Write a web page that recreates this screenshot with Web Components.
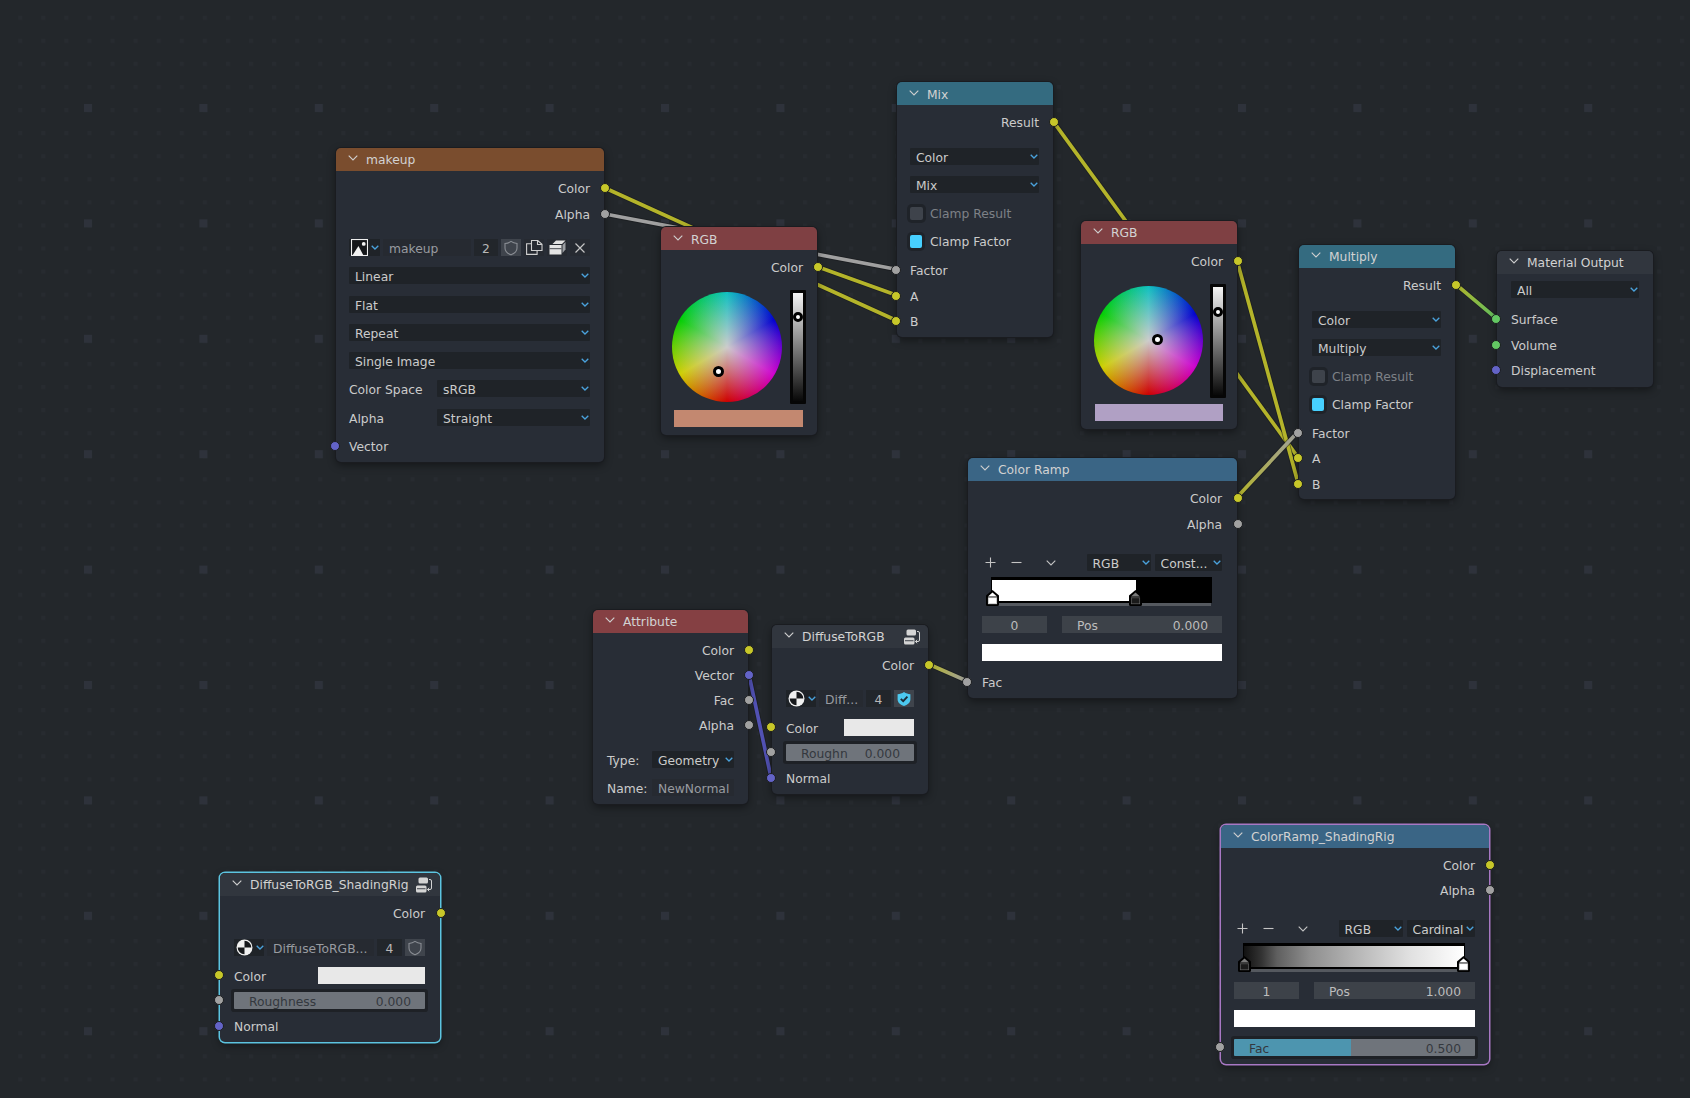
<!DOCTYPE html>
<html lang="en">
<head>
<meta charset="utf-8">
<title>Shader editor</title>
<style>
html,body{margin:0;padding:0;background:#23272b;}
</style>
</head>
<body>
<bn-canvas>
  <bn-links></bn-links>

  <bn-node x="336" y="148" w="268" label="makeup" head="#7a4d2e" pl="13" pr="14" pb="7">
    <bn-row mt="9" align="right" socket="yellow" side="right">Color</bn-row>
    <bn-row mt="9" align="right" socket="gray" side="right">Alpha</bn-row>
    <bn-row mt="16" gap="3">
      <bn-iconbtn kind="dropdown" icon="image" style="width:31px"></bn-iconbtn>
      <bn-field style="flex:1">makeup</bn-field>
      <bn-field center dark style="width:24px">2</bn-field>
      <bn-iconbtn icon="shield" on style="width:20px"></bn-iconbtn>
      <bn-iconbtn icon="dup" style="width:20px"></bn-iconbtn>
      <bn-iconbtn icon="fake" style="width:20px"></bn-iconbtn>
      <bn-iconbtn icon="x" style="width:20px"></bn-iconbtn>
    </bn-row>
    <bn-row mt="11"><bn-select style="flex:1">Linear</bn-select></bn-row>
    <bn-row mt="12"><bn-select style="flex:1">Flat</bn-select></bn-row>
    <bn-row mt="11"><bn-select style="flex:1">Repeat</bn-select></bn-row>
    <bn-row mt="11"><bn-select style="flex:1">Single Image</bn-select></bn-row>
    <bn-row mt="11"><bn-label style="width:88px">Color Space</bn-label><bn-select style="flex:1">sRGB</bn-select></bn-row>
    <bn-row mt="12"><bn-label style="width:88px">Alpha</bn-label><bn-select style="flex:1">Straight</bn-select></bn-row>
    <bn-row mt="12" socket="purple" side="left">Vector</bn-row>
  </bn-node>

  <bn-node x="661" y="227" w="156" label="RGB" head="#7f4043" ht="3" pl="13" pr="14" pb="8">
    <bn-row mt="9" align="right" socket="yellow" side="right">Color</bn-row>
    <bn-wheel mt="14" ml="-1.700" size="110" dx="46.500" dy="79" ty="27"></bn-wheel>
    <bn-swatch mt="6" color="#c38870"></bn-swatch>
  </bn-node>

  <bn-node x="897" y="82" w="156" label="Mix" head="#346b80" ht="3" pl="13" pr="14" pb="7">
    <bn-row mt="9" align="right" socket="yellow" side="right">Result</bn-row>
    <bn-row mt="17"><bn-select style="flex:1">Color</bn-select></bn-row>
    <bn-row mt="11"><bn-select style="flex:1">Mix</bn-select></bn-row>
    <bn-row mt="12"><bn-check>Clamp Result</bn-check></bn-row>
    <bn-row mt="11"><bn-check checked>Clamp Factor</bn-check></bn-row>
    <bn-row mt="12" socket="gray" side="left">Factor</bn-row>
    <bn-row mt="9" socket="yellow" side="left">A</bn-row>
    <bn-row mt="8" socket="yellow" side="left">B</bn-row>
  </bn-node>

  <bn-node x="1081" y="221" w="156" label="RGB" head="#7f4043" pl="13" pr="14" pb="8">
    <bn-row mt="9" align="right" socket="yellow" side="right">Color</bn-row>
    <bn-wheel mt="14" ml="-0.300" size="109" dx="63.300" dy="53" ty="27.500"></bn-wheel>
    <bn-swatch mt="6" color="#b0a0c4" style="margin-left:1px"></bn-swatch>
  </bn-node>

  <bn-node x="1299" y="245" w="156" label="Multiply" head="#346b80" pl="13" pr="14" pb="6">
    <bn-row mt="9" align="right" socket="yellow" side="right">Result</bn-row>
    <bn-row mt="17"><bn-select style="flex:1">Color</bn-select></bn-row>
    <bn-row mt="11"><bn-select style="flex:1">Multiply</bn-select></bn-row>
    <bn-row mt="12"><bn-check>Clamp Result</bn-check></bn-row>
    <bn-row mt="11"><bn-check checked>Clamp Factor</bn-check></bn-row>
    <bn-row mt="12" socket="gray" side="left">Factor</bn-row>
    <bn-row mt="8" socket="yellow" side="left">A</bn-row>
    <bn-row mt="9" socket="yellow" side="left">B</bn-row>
  </bn-node>

  <bn-node x="1497" y="251" w="156" label="Material Output" head="#31363e" pl="14" pr="14" pb="8">
    <bn-row mt="7"><bn-select style="flex:1">All</bn-select></bn-row>
    <bn-row mt="13" socket="green" side="left">Surface</bn-row>
    <bn-row mt="9" socket="green" side="left">Volume</bn-row>
    <bn-row mt="8" socket="purple" side="left">Displacement</bn-row>
  </bn-node>

  <bn-node x="968" y="458" w="269" label="Color Ramp" head="#3a6585" pl="14" pr="15" pb="7">
    <bn-row mt="9" align="right" socket="yellow" side="right">Color</bn-row>
    <bn-row mt="9" align="right" socket="gray" side="right">Alpha</bn-row>
    <bn-ramp-tools mt="21" mode="Const..."></bn-ramp-tools>
    <bn-ramp mt="6" fill="linear-gradient(90deg,#fff 0,#fff 65.700%,#000 65.700%)" width="221" a="1.500" acolor="#fff" b="145" bcolor="#000"></bn-ramp>
    <bn-row mt="10" gap="15">
      <bn-num center style="width:65px">0</bn-num>
      <bn-num value="0.000" style="flex:1">Pos</bn-num>
    </bn-row>
    <bn-swatch mt="11" color="#ffffff"></bn-swatch>
    <bn-row mt="13" socket="gray" side="left">Fac</bn-row>
  </bn-node>

  <bn-node x="1221" y="825" w="268" label="ColorRamp_ShadingRig" head="#3a6585" pl="13" pr="14" pb="8" outline="#a878c4">
    <bn-row mt="9" align="right" socket="yellow" side="right">Color</bn-row>
    <bn-row mt="8" align="right" socket="gray" side="right">Alpha</bn-row>
    <bn-ramp-tools mt="21" mode="Cardinal"></bn-ramp-tools>
    <bn-ramp mt="6" fill="linear-gradient(90deg,#111 0,#333 8%,#5f5f5f 15%,#8f8f8f 30%,#b4b4b4 50%,#e0e0e0 75%,#fff 100%)" width="222" a="1.500" acolor="#000" b="221" bcolor="#fff"></bn-ramp>
    <bn-row mt="10" gap="15">
      <bn-num center style="width:65px">1</bn-num>
      <bn-num value="1.000" style="flex:1">Pos</bn-num>
    </bn-row>
    <bn-swatch mt="11" color="#ffffff"></bn-swatch>
    <bn-row mt="12" socket="gray" side="left"><bn-bar value="0.500" fill="48.600" style="flex:1">Fac</bn-bar></bn-row>
  </bn-node>

  <bn-node x="593" y="610" w="155" label="Attribute" head="#854043" pl="14" pr="14" pb="8">
    <bn-row mt="9" align="right" socket="yellow" side="right">Color</bn-row>
    <bn-row mt="8" align="right" socket="purple" side="right">Vector</bn-row>
    <bn-row mt="8" align="right" socket="gray" side="right">Fac</bn-row>
    <bn-row mt="8" align="right" socket="gray" side="right">Alpha</bn-row>
    <bn-row mt="17"><bn-label style="width:45px">Type:</bn-label><bn-select style="flex:1">Geometry</bn-select></bn-row>
    <bn-row mt="11"><bn-label style="width:45px">Name:</bn-label><bn-field style="flex:1">NewNormal</bn-field></bn-row>
  </bn-node>

  <bn-node x="772" y="625" w="156" label="DiffuseToRGB" head="#31363e" group pl="14" pr="14" pb="7">
    <bn-row mt="9" align="right" socket="yellow" side="right">Color</bn-row>
    <bn-row mt="16" gap="3">
      <bn-iconbtn kind="dropdown" icon="sphere" style="width:30px"></bn-iconbtn>
      <bn-field style="flex:1">Diff...</bn-field>
      <bn-field center dark style="width:25px">4</bn-field>
      <bn-iconbtn icon="shieldon" on style="width:20px"></bn-iconbtn>
    </bn-row>
    <bn-row mt="12" socket="yellow" side="left"><bn-label style="width:58px">Color</bn-label><bn-swatch color="#e8e8e8" style="flex:1"></bn-swatch></bn-row>
    <bn-row mt="8" socket="gray" side="left"><bn-bar value="0.000" style="flex:1">Roughn</bn-bar></bn-row>
    <bn-row mt="9" socket="purple" side="left">Normal</bn-row>
  </bn-node>

  <bn-node x="220" y="873" w="220" label="DiffuseToRGB_ShadingRig" head="#31363e" group pl="14" pr="15" pb="7" outline="#5cc4e0">
    <bn-row mt="9" align="right" socket="yellow" side="right">Color</bn-row>
    <bn-row mt="17" gap="3">
      <bn-iconbtn kind="dropdown" icon="sphere" style="width:30px"></bn-iconbtn>
      <bn-field style="flex:1">DiffuseToRGB...</bn-field>
      <bn-field center dark style="width:25px">4</bn-field>
      <bn-iconbtn icon="shield" on style="width:20px"></bn-iconbtn>
    </bn-row>
    <bn-row mt="11" socket="yellow" side="left"><bn-label style="width:84px">Color</bn-label><bn-swatch color="#e8e8e8" style="flex:1"></bn-swatch></bn-row>
    <bn-row mt="8" socket="gray" side="left"><bn-bar value="0.000" style="flex:1">Roughness</bn-bar></bn-row>
    <bn-row mt="9" socket="purple" side="left">Normal</bn-row>
  </bn-node>
</bn-canvas>

<script>
const FONT = '"DejaVu Sans","Liberation Sans",sans-serif';
const ICONS = {
  image:`<svg viewBox="0 0 16 16" width="17" height="17"><rect x=".5" y=".5" width="15" height="15" fill="#15171a" stroke="#eee"/><path d="M1 16 7 6.500l5 9.500z" fill="#f2f2f2"/><circle cx="12" cy="4.600" r="1.800" fill="#f2f2f2"/></svg>`,
  sphere:`<svg viewBox="0 0 16 16" width="17" height="17"><circle cx="8" cy="8" r="7.500" fill="#f0f0f0"/><path d="M8 8V1.600A6.400 6.400 0 0 1 14.400 8z M8 8v6.400A6.400 6.400 0 0 1 1.600 8z" fill="#16181b"/></svg>`,
  shield:`<svg viewBox="0 0 16 16" width="16" height="16"><path d="M8 1.400c2 1.400 4 1.900 6 2.100v4.600c0 3.300-2.700 5.600-6 6.700-3.300-1.100-6-3.400-6-6.700V3.500c2-.2 4-.7 6-2.100z" fill="none" stroke="#8a8e94" stroke-width="1.100"/></svg>`,
  shieldon:`<svg viewBox="0 0 16 16" width="16" height="16"><path d="M8 1c2 1.500 4 2 6.400 2.200v5c0 3.400-3 5.800-6.400 6.800-3.400-1-6.400-3.400-6.400-6.800v-5C4 3 6 2.500 8 1z" fill="#4cc9f0"/><path d="M4.800 7.800 7.200 10.200 11.400 5.600" fill="none" stroke="#1c2c38" stroke-width="1.900"/></svg>`,
  dup:`<svg viewBox="0 0 17 15" width="17" height="15"><path d="M5.500 10.500V.5h6.200L16 4.300v6.200z M11.500.5v4h4.500" fill="none" stroke="#cfcfcf" stroke-width="1.100"/><path d="M5 3.800H.6v10.600h10.500V10.600" fill="none" stroke="#cfcfcf" stroke-width="1.100"/></svg>`,
  fake:`<svg viewBox="0 0 17 15" width="17" height="15"><path d="M3.500 4 7 .5h9.500L13 4z" fill="#e2e2e2"/><path d="M.5 5H12.500V14.500H.5z" fill="#e4e4e4"/><path d="M.5 8.700H12.500" stroke="#45494f" stroke-width="1"/><path d="M13.500 5 16.500 2V9.500L13.500 13z" fill="#9b9ea3"/></svg>`,
  x:`<svg viewBox="0 0 12 12" width="12" height="12"><path d="M1.500 1.500 10.500 10.500M10.500 1.500 1.500 10.500" stroke="#c4c4c4" stroke-width="1.200" fill="none"/></svg>`,
};
const GROUP = `<svg viewBox="0 0 16 16" width="16" height="16"><rect x="2.500" y=".5" width="9.500" height="6" rx="1.500" fill="#d4d4d4"/><rect x="0" y="8.500" width="10.500" height="7" rx="1.500" fill="#d4d4d4"/><rect x="1" y="11.300" width="8.500" height=".9" fill="#31363e"/><path d="M13 2.500h1a1.500 1.500 0 0 1 1.500 1.500v7a1.500 1.500 0 0 1-1.500 1.500h-2.500M13.200 10.800l-1.800 1.700 1.800 1.700" fill="none" stroke="#d4d4d4" stroke-width="1"/></svg>`;
const CHEV = c => `<svg viewBox="0 0 10 6" width="10" height="6"><path d="M.7.7 5 5 9.300.7" fill="none" stroke="${c}" stroke-width="1.100"/></svg>`;
const SMALLCHEV = `<svg viewBox="0 0 8 5" width="8" height="5"><path d="M.7.7 4 4 7.300.7" fill="none" stroke="#4aa2dc" stroke-width="1.300"/></svg>`;
const SOCK = {yellow:'#c7c729',gray:'#a1a1a1',purple:'#6363c7',green:'#63c763'};

function el(name, css, html, init){
  customElements.define(name, class extends HTMLElement{
    constructor(){ super(); this.attachShadow({mode:'open'}); }
    connectedCallback(){
      if(this._done) return; this._done = true;
      const h = typeof html === 'function' ? html(this) : html;
      this.shadowRoot.innerHTML = `<style>${css}</style>${h}`;
      if(this.hasAttribute('mt')) this.style.marginTop = this.getAttribute('mt') + 'px';
      if(init) init(this);
    }
  });
}

el('bn-canvas', `
  :host{display:block;position:relative;width:1690px;height:1098px;overflow:hidden;background:#23272b;
    font:12.300px/17px ${FONT};color:#cbcbcb;}
  svg{position:absolute;inset:0;}
`, `<svg width="1690" height="1098" aria-hidden="true">
    <defs>
      <pattern id="s" x="18.200" y="15.700" width="23.080" height="23.080" patternUnits="userSpaceOnUse"><rect width="4" height="4" fill="#272b30"/></pattern>
      <pattern id="b" x="84" y="104" width="115.400" height="115.400" patternUnits="userSpaceOnUse"><rect width="8" height="8" fill="#2e323b"/></pattern>
    </defs>
    <rect width="1690" height="1098" fill="url(#s)"/>
    <rect width="1690" height="1098" fill="url(#b)"/>
  </svg><slot></slot>`);

el('bn-links', `:host{position:absolute;inset:0;display:block;} svg{display:block;}`, () => {
  const c = {y:'#b4b42a',g:'#a0a0a0',p:'#5252b4',n:'#5fbf5f'};
  const L = [
    [605,188,896,320.3,'y','y'],
    [605,214,896,269.3,'g','g'],
    [817.5,266.7,896,295,'y','y'],
    [1053.3,121.7,1298,457.3,'y','y'],
    [1237,260.5,1298,482.7,'y','y'],
    [1237,497.3,1298,431.7,'y','g'],
    [1455.4,284,1496.3,318.3,'y','n'],
    [749,675,771,777.3,'p','p'],
    [928.3,664,967,681,'y','g'],
  ];
  let defs='', body='';
  L.forEach((l,i)=>{
    defs += `<linearGradient id="g${i}" gradientUnits="userSpaceOnUse" x1="${l[0]}" y1="${l[1]}" x2="${l[2]}" y2="${l[3]}"><stop offset="0" stop-color="${c[l[4]]}"/><stop offset="1" stop-color="${c[l[5]]}"/></linearGradient>`;
    const d = `M${l[0]} ${l[1]}L${l[2]} ${l[3]}`;
    body += `<path d="${d}" stroke="#15171a" stroke-opacity=".55" stroke-width="5.400" fill="none"/><path d="${d}" stroke="url(#g${i})" stroke-width="3.700" fill="none"/>`;
  });
  return `<svg width="1690" height="1098" aria-hidden="true"><defs>${defs}</defs>${body}</svg>`;
});

el('bn-node', `
  :host{position:absolute;display:block;box-sizing:border-box;background:#282d36;border-radius:5px;
    box-shadow:0 0 0 1px #1a1c20,0 3px 8px rgba(0,0,0,.45);}
  .h{height:23px;display:flex;align-items:center;border-radius:5px 5px 0 0;color:#d2d2d2;white-space:nowrap;padding-top:1px;box-sizing:border-box;}
  .c{margin-left:12px;width:10px;height:6px;margin-top:-4px;margin-right:8px;flex:none;display:flex;}
  .g{margin-left:auto;margin-right:8px;display:flex;margin-top:-1px;}
  .b{display:flex;flex-direction:column;}
`, n => `<div class="h" style="background:${n.getAttribute('head')}${n.hasAttribute('ht')?`;padding-top:${n.getAttribute('ht')}px`:''}"><span class="c">${CHEV('#cfcfcf')}</span><span>${n.getAttribute('label')}</span>${n.hasAttribute('group')?`<span class="g">${GROUP}</span>`:''}</div><div class="b"><slot></slot></div>`,
n => {
  const a = k => n.getAttribute(k);
  n.style.left = a('x')+'px'; n.style.top = a('y')+'px'; n.style.width = a('w')+'px';
  n.style.setProperty('--pl', a('pl')+'px'); n.style.setProperty('--pr', a('pr')+'px');
  n.shadowRoot.querySelector('.b').style.cssText = `padding:0 ${a('pr')}px ${a('pb')}px ${a('pl')}px`;
  if(a('outline')){ n.style.boxShadow = `0 0 0 1.500px ${a('outline')},0 3px 8px rgba(0,0,0,.45)`; }
});

el('bn-row', `
  :host{display:flex;position:relative;height:17px;align-items:center;white-space:nowrap;box-sizing:border-box;}
  :host([align=right]){justify-content:flex-end;}
  .s{position:absolute;top:3px;width:10px;height:10px;box-sizing:border-box;border-radius:50%;border:.7px solid #1b1d20;}
`, r => {
  const c = SOCK[r.getAttribute('socket')];
  const side = r.getAttribute('side');
  const pos = side === 'left' ? 'left:calc(-1 * var(--pl) - 6.500px)' : 'right:calc(-1 * var(--pr) - 5.500px)';
  return `<slot></slot>${c?`<span class="s" style="background:${c};${pos}"></span>`:''}`;
}, r => {
  if(r.hasAttribute('gap')) r.style.gap = r.getAttribute('gap')+'px';
  if(r.childElementCount === 0) r.style.paddingTop = '2px';
});

el('bn-label', `:host{display:block;flex:none;white-space:nowrap;height:17px;box-sizing:border-box;padding-top:2px;}`, `<slot></slot>`);

el('bn-select', `
  :host{display:flex;align-items:center;height:17px;background:#1f2328;box-sizing:border-box;padding:0 0 0 6px;border-radius:1px;min-width:0;position:relative;overflow:hidden;}
  span{flex:1;white-space:nowrap;overflow:hidden;height:17px;line-height:21px;}
  i{flex:none;display:flex;margin:0 1px 0 0;}
`, `<span><slot></slot></span><i>${SMALLCHEV}</i>`);

el('bn-field', `
  :host{display:block;height:17px;line-height:21px;background:#262a31;color:#989ba0;padding:0 6px;box-sizing:border-box;white-space:nowrap;overflow:hidden;min-width:0;flex:none;}
  :host([center]){text-align:center;padding:0;color:#b8b8b8;}
  :host([dark]){background:#22262b;}
`, `<slot></slot>`);

el('bn-num', `
  :host{display:flex;justify-content:space-between;height:17px;line-height:21px;background:#3d4249;padding:0 14px 0 15px;box-sizing:border-box;color:#bdbdbd;white-space:nowrap;overflow:hidden;}
  :host([center]){justify-content:center;padding:0;}
`, n => `<span><slot></slot></span>${n.hasAttribute('value')?`<span>${n.getAttribute('value')}</span>`:''}`);

el('bn-bar', `
  :host{display:flex;justify-content:space-between;height:17px;line-height:21px;padding:0 14px 0 15px;box-sizing:border-box;color:#34383e;white-space:nowrap;box-shadow:0 0 0 3px #1e2126;border-radius:1px;margin:0;}
`, b => `<span><slot></slot></span><span>${b.getAttribute('value')}</span>`,
b => {
  const f = b.getAttribute('fill');
  b.style.background = f ? `linear-gradient(90deg,#4d95af ${f}%,#6f747b ${f}%)` : '#6f747b';
});

el('bn-check', `
  :host{display:flex;align-items:center;height:17px;white-space:nowrap;color:#7e8187;}
  :host([checked]){color:#cbcbcb;}
  i{width:13px;height:13px;margin-right:7px;background:#3e434b;border-radius:2px;box-shadow:0 0 0 3px #1f2329;flex:none;}
  :host([checked]) i{background:#47d0ff;width:12px;margin-right:8px;}
  span{line-height:19px;height:17px;}
`, `<i></i><span><slot></slot></span>`);

el('bn-swatch', `:host{display:block;height:17px;}`, ``, s => { s.style.background = s.getAttribute('color'); });

el('bn-iconbtn', `
  :host{display:flex;align-items:center;justify-content:center;height:17px;background:#262a31;flex:none;box-sizing:border-box;}
  :host([on]){background:#3f444c;}
  :host([kind=dropdown]){background:#1f2328;justify-content:flex-start;padding-left:2px;gap:3px;}
  span{display:flex;}
`, b => `<span>${ICONS[b.getAttribute('icon')]}</span>${b.getAttribute('kind')==='dropdown'?`<span>${SMALLCHEV}</span>`:''}`);

el('bn-wheel', `
  :host{display:flex;height:114px;}
  .w{margin-top:2px;border-radius:50%;position:relative;flex:none;
    background:radial-gradient(closest-side,#cccccc 0,rgba(204,204,204,0) 100%),
      conic-gradient(#0fc0c0,#0000cf 60deg,#cf00cf 120deg,#cf0000 180deg,#cfcf00 240deg,#00cf00 300deg,#0fc0c0 360deg);}
  .d{position:absolute;width:11px;height:11px;margin:-5.500px 0 0 -5.500px;border-radius:50%;box-sizing:border-box;background:#fff;border:3px solid #000;}
  .v{width:16px;height:114px;background:#060606;position:relative;flex:none;border-radius:1px;}
  .v i{position:absolute;left:3px;top:3px;width:10px;height:108px;background:linear-gradient(#f4f4f4,#080808);}
`, w => {
  const ml = +w.getAttribute('ml'), s = +w.getAttribute('size');
  return `<div class="w" style="width:${s}px;height:${s}px;margin-left:${ml}px;margin-right:${116-ml-s}px"><span class="d" style="left:${w.getAttribute('dx')}px;top:${w.getAttribute('dy')}px"></span></div>
  <div class="v"><i></i><span class="d" style="left:8px;top:${w.getAttribute('ty')}px;width:10px;height:10px;margin:-5px 0 0 -5px"></span></div>`;
});

el('bn-ramp-tools', `
  :host{display:flex;height:17px;align-items:center;}
  .b{display:flex;justify-content:center;flex:none;}
  bn-select{flex:none;width:64.400px;}
  .m{flex:1;width:auto;margin-left:3.600px;}
`, t => `<span class="b" style="width:17.400px"><svg viewBox="0 0 11 11" width="11" height="11"><path d="M5.500.5v10M.5 5.500h10" stroke="#c4c4c4" stroke-width="1.100"/></svg></span>
  <span class="b" style="width:35.200px"><svg viewBox="0 0 11 11" width="11" height="11"><path d="M.5 5.500h10" stroke="#c4c4c4" stroke-width="1.100"/></svg></span>
  <span class="b" style="width:32px">${CHEV('#c4c4c4')}</span>
  <span style="width:20px;flex:none"></span>
  <bn-select>RGB</bn-select><bn-select class="m">${t.getAttribute('mode')}</bn-select>`);

el('bn-ramp', `
  :host{display:block;position:relative;height:29px;margin-left:8.700px;}
  .f{position:absolute;left:0;top:0;height:26px;background:#000;}
  .i{position:absolute;left:1.500px;right:1px;top:3px;height:20.500px;}
  .t{position:absolute;left:0;top:26px;height:3px;background:#55595f;}
  svg{position:absolute;top:13px;margin-left:-7.500px;}
`, r => {
  const w = +r.getAttribute('width');
  const h = (x,c) => {
    const white = c === '#fff';
    return `<svg viewBox="0 0 15 16" width="15" height="16" style="left:${x}px"><path d="M7.500 0 14 5.500V14.500Q14 16 12.500 16H2.500Q1 16 1 14.500V5.500Z" fill="#000"/><path d="M7.500 2.500 12 6.500H3Z" fill="${white?'#fff':'#7a7a7a'}"/><rect x="3.300" y="7.800" width="8.400" height="6" fill="${white?'#fff':'#1a1a1a'}" stroke="${white?'#ddd':'#666'}" stroke-width=".7"/></svg>`;
  };
  return `<div class="t" style="width:${w-1}px"></div><div class="f" style="width:${w}px"><div class="i" style="background:${r.getAttribute('fill')}"></div></div>
    ${h(+r.getAttribute('a'),r.getAttribute('acolor'))}${h(+r.getAttribute('b'),r.getAttribute('bcolor'))}`;
});
</script>
</body>
</html>
